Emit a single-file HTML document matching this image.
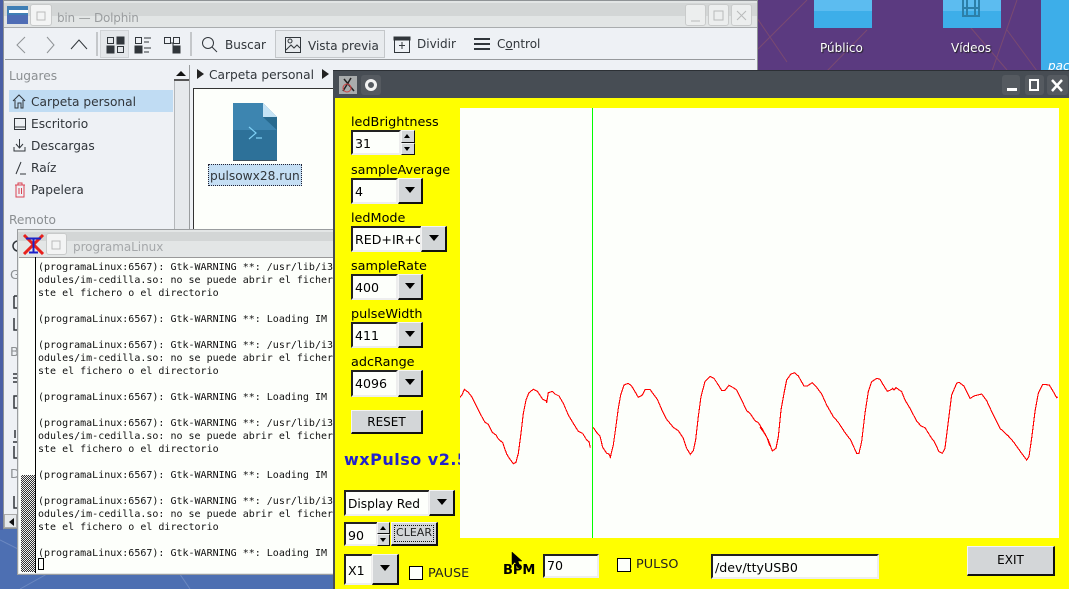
<!DOCTYPE html>
<html><head><meta charset="utf-8"><style>
html,body{margin:0;padding:0}
body{width:1069px;height:589px;overflow:hidden;position:relative;background:#4d6fb2;font-family:"DejaVu Sans","Liberation Sans",sans-serif;font-size:12.8px;color:#000}
div,span,svg{position:absolute;box-sizing:border-box}
.t{white-space:nowrap;line-height:16px}
.d{color:#31363b;font-size:12.2px}
.fld{background:#fdfffb;border:2px solid;border-color:#222 #eee #eee #222;padding-left:2px;line-height:23px;overflow:hidden;white-space:nowrap;font-size:12.6px}
.btn{background:#d3d6d8;border:1px solid;border-color:#f4f4f4 #111 #111 #f4f4f4;border-right-width:2px;border-bottom-width:2px;text-align:center}
.arr{width:0;height:0;border:5px solid transparent;border-top:6px solid #000;border-bottom:0;left:50%;top:50%;margin:-4px 0 0 -5px}
.cb{background:#fdfffb;border:1px solid #000;width:14px;height:14px}
pre{position:absolute;margin:0;font:10px/13px "DejaVu Sans Mono","Liberation Mono",monospace;color:#111}
</style></head><body>
<!-- desktop -->
<div style="left:757px;top:0;width:312px;height:71px;background:#5b3a80"></div>
<svg style="left:757px;top:0" width="312" height="71" stroke="#7a4a70" fill="none" stroke-width="1"><path d="M0 18L30 62M50 0L0 50M190 0L250 70M250 30L280 71M260 0L235 71M110 30L70 71"/></svg>
<div style="left:814px;top:0;width:58px;height:28px;background:#3daee9"></div><div style="left:814px;top:0;width:58px;height:11px;background:#5cbcf0"></div>
<div style="left:943px;top:0;width:58px;height:28px;background:#3daee9"></div><div style="left:943px;top:0;width:58px;height:11px;background:#5cbcf0"></div>
<svg style="left:961px;top:0" width="20" height="18" fill="none" stroke="#2c7fa8" stroke-width="2"><path d="M2 0V16H18V0M2 8H18M6 0V16M14 0V16"/></svg>
<div style="left:1041px;top:0;width:28px;height:71px;background:#3daee9"></div>
<div class="t" style="left:820px;top:40px;color:#fff;font-size:12px;text-shadow:1px 1px 1px #222">Público</div>
<div class="t" style="left:951px;top:40px;color:#fff;font-size:12px;text-shadow:1px 1px 1px #222">Vídeos</div>
<div class="t" style="left:1048px;top:58px;color:#fff;font-size:12px;font-style:italic">pac</div>
<svg style="left:0;top:530px" width="334" height="59" stroke="#6c88c0" fill="none"><path d="M0 10L60 40M150 0L190 59M20 59L90 20"/></svg>

<!-- Dolphin -->
<div style="left:3px;top:0;width:755px;height:529px;background:#eef1f5;border:1px solid #8f9396"></div>
<div style="left:0;top:0;width:3px;height:530px;background:#4a5fa5"></div>
<div style="left:4px;top:1px;width:753px;height:26px;background:#e2e5e5"></div>
<div style="left:4px;top:3px;width:753px;height:13px;background:#d3d6d6"></div>
<svg style="left:7px;top:5px" width="22" height="20"><rect y="1" width="21" height="18" fill="#3f7fb5"/><rect x="2" y="5" width="19" height="3" fill="#fff"/><path d="M0 10H21V19H0Z" fill="#4f6db5"/></svg>
<div style="left:30px;top:4px;width:22px;height:22px;background:#f3f4f4;border:1px solid #c8caca;border-radius:3px"></div>
<svg style="left:35px;top:10px" width="12" height="12" fill="none" stroke="#bbb"><rect x="2" y="2" width="8" height="8"/></svg>
<div class="t" style="left:57px;top:10px;color:#9a9d9f;font-size:12px;letter-spacing:-.2px">bin — Dolphin</div>
<div style="left:685px;top:4px;width:21px;height:22px;background:#eceeee;border:1px solid #c9cbcb;border-radius:3px"></div>
<div style="left:708px;top:4px;width:21px;height:22px;background:#eceeee;border:1px solid #c9cbcb;border-radius:3px"></div>
<div style="left:731px;top:4px;width:21px;height:22px;background:#eceeee;border:1px solid #c9cbcb;border-radius:3px"></div>
<svg style="left:685px;top:4px" width="67" height="22" fill="none" stroke="#b8bbbb"><path d="M6 17H15M29 7H38V16H29ZM52 7L61 16M61 7L52 16"/></svg>
<div style="left:4px;top:27px;width:753px;height:1px;background:#a9acae"></div>
<div style="left:5px;top:59px;width:750px;height:1px;background:#96999c"></div>
<!-- toolbar -->
<svg style="left:0;top:28px" width="500" height="32" fill="none" stroke="#31363b" stroke-width="1">
<path d="M25 9L17 17L25 25M47 9L54 17L47 25" stroke="#8f9396"/>
<path d="M71 21L79 12L87 21"/>
<path d="M97 4V28M191 4V28" stroke="#9a9d9f"/>
<rect x="100.5" y="2.5" width="28" height="27" fill="#e4e7ea" stroke="#d0d3d6"/>
<rect x="107.5" y="9.5" width="6" height="6"/><rect x="117" y="9" width="7" height="7" fill="#31363b"/><rect x="107" y="18" width="7" height="7" fill="#31363b"/><rect x="117.5" y="18.500" width="6" height="6"/>
<rect x="135.500" y="9.500" width="6" height="6"/><rect x="135" y="18" width="7" height="7" fill="#31363b"/><path d="M144 10H151M144 14H149M144 20H151M144 24H149"/>
<rect x="164.500" y="9.500" width="6" height="6"/><rect x="173.500" y="9.500" width="6" height="6"/><rect x="173" y="18" width="7" height="7" fill="#31363b"/><path d="M170 15H173V20"/>
<circle cx="208" cy="15" r="5.500"/><path d="M212 19L217 24"/>
<rect x="275.500" y="2.500" width="109" height="27" stroke="#c4c7ca" fill="#e8ebee"/>
<rect x="285.500" y="9.500" width="15" height="15"/><circle cx="290" cy="13" r="2"/><path d="M286 22L291 17L294 20L297 17L300 20"/>
<rect x="394.500" y="9.500" width="15" height="15"/><path d="M402 14V21M399 17.500H405" /><rect x="394" y="9" width="16" height="3" fill="#31363b"/>
<path d="M474 11H490M474 16H490M474 21H490" stroke-width="2"/>
<path d="M541 23H546L543.500 26Z" fill="#31363b"/>
</svg>
<div class="t d" style="left:225px;top:37px;font-size:12px">Buscar</div>
<div class="t d" style="left:308px;top:38px;font-size:12px">Vista previa</div>
<div class="t d" style="left:417px;top:36px;font-size:12px">Dividir</div>
<div class="t d" style="left:497px;top:36px;font-size:12px">C<span style="position:static;text-decoration:underline">o</span>ntrol</div>
<!-- sidebar -->
<div class="t" style="left:9px;top:68px;color:#8b8f92;font-size:12.2px">Lugares</div>
<div style="left:9px;top:90px;width:164px;height:22px;background:#c0dcf3"></div>
<div class="t d" style="left:31px;top:94px">Carpeta personal</div>
<div class="t d" style="left:31px;top:116px">Escritorio</div>
<div class="t d" style="left:31px;top:138px">Descargas</div>
<div class="t d" style="left:31px;top:160px">Raíz</div>
<div class="t d" style="left:31px;top:182px">Papelera</div>
<div class="t" style="left:9px;top:212px;color:#8b8f92;font-size:12.2px">Remoto</div>
<svg style="left:12px;top:92px" width="16" height="110" fill="none" stroke="#31363b">
<path d="M1 9L7 3L13 9M3 8V16H6V11H9V16H11V8"/>
<rect x="2.500" y="26.500" width="11" height="11"/><path d="M3 35H13"/>
<path d="M2 55V59H13V55M7.500 47V55M4 52L7.500 56L11 52"/>
<path d="M4 82L9 70M8 82H14"/>
<path d="M3 93H13M6 93V91H10V93M4 93V105H12V93M7 96V102M9.500 96V102" stroke="#da4453"/>
</svg>
<div style="left:174px;top:65px;width:15px;height:464px;background:#e6e9ec;border-left:1px solid #b4b7ba"></div>
<div style="left:174px;top:65px;width:15px;height:16px;background:#eef1f5;border-bottom:2px solid #555"></div>
<div style="left:176px;top:71px;width:0;height:0;border:5px solid transparent;border-bottom:5px solid #111;border-top:0"></div>
<div style="left:189px;top:65px;width:4px;height:464px;background:#eef1f5;border-left:1px solid #9a9d9f"></div>
<div style="left:197px;top:69px;width:0;height:0;border:5px solid transparent;border-left:7px solid #222"></div>
<div class="t d" style="left:209px;top:67px">Carpeta personal</div>
<div style="left:322px;top:69px;width:0;height:0;border:5px solid transparent;border-left:7px solid #222"></div>
<div style="left:193px;top:88px;width:142px;height:441px;background:#fdfffb;border:1px solid #333;border-right:0"></div>
<svg style="left:233px;top:103px" width="44" height="58"><path d="M0 0H30L44 14V58H0Z" fill="#2d7199"/><path d="M0 0H30V14L44 27H0Z" fill="#3d85b0"/><path d="M30 0L44 14H30Z" fill="#c5e3f5"/><path d="M30 14H44V27Z" fill="#276a8f"/><path d="M16 24L23 30L16 36M23 35H29" fill="none" stroke="#7fd0f5" stroke-width="1.200"/><rect y="57" width="44" height="1" fill="#3c4d5a"/></svg>
<div style="left:208px;top:164px;width:94px;height:22px;background:#c5dff4;border:1px dotted #223"></div>
<div class="t d" style="left:210px;top:168px">pulsowx28.run</div>
<!-- sidebar leftovers -->
<div class="t" style="left:10px;top:268px;color:#8b8f92">G</div>
<div class="t" style="left:10px;top:345px;color:#8b8f92">B</div>
<div class="t" style="left:10px;top:467px;color:#8b8f92">D</div>
<svg style="left:10px;top:238px" width="8" height="290" fill="none" stroke="#31363b" stroke-width="1.500"><circle cx="8" cy="8" r="5"/><path d="M4 58H8M4 58V70H8M4 80V92H8M3 136H8M3 140H8M3 144H8M4 158H8V170H4ZM5 192V200M3 204H7M4 208V220H8M4 258V270H8"/></svg>
<div style="left:4px;top:514px;width:13px;height:14px;background:#e6e9ec;border:1px solid #aaa"></div>
<div style="left:9px;top:518px;width:0;height:0;border:4px solid transparent;border-right:5px solid #111;border-left:0"></div>
<div style="left:3px;top:528px;width:15px;height:1px;background:#8f9396"></div>

<!-- Terminal -->
<div style="left:17px;top:229px;width:318px;height:346px;background:#e3e6e6;border:1px solid #9a9d9f"></div>
<div style="left:18px;top:232px;width:316px;height:9px;background:#d3d6d6"></div>
<svg style="left:22px;top:233px" width="23" height="22" fill="none"><path d="M2 2L21 21M21 2L2 21" stroke="#e8211c" stroke-width="3"/><path d="M4 5.500H19M11.500 5V19M7 19.500H16" stroke="#1c22c8" stroke-width="2"/></svg>
<div style="left:46px;top:233px;width:21px;height:22px;background:#f3f4f4;border:1px solid #c8caca;border-radius:3px"></div>
<svg style="left:50px;top:239px" width="12" height="12" fill="none" stroke="#bbb"><rect x="2" y="2" width="8" height="8"/></svg>
<div class="t" style="left:73px;top:239px;color:#a5a8aa;font-size:12px;letter-spacing:-.05px">programaLinux</div>
<div style="left:19px;top:257px;width:316px;height:316px;background:#fdfffb;border-top:1px solid #999"></div>
<div style="left:35px;top:257px;width:1px;height:316px;background:#000"></div>
<div style="left:21px;top:475px;width:14px;height:97px;background:repeating-conic-gradient(#333 0 25%,#eee 0 50%) 0 0/2px 2px"></div>
<pre style="left:38px;top:261px;width:295px;height:312px;overflow:hidden">(programaLinux:6567): Gtk-WARNING **: /usr/lib/i386
odules/im-cedilla.so: no se puede abrir el fichero
ste el fichero o el directorio

(programaLinux:6567): Gtk-WARNING **: Loading IM

(programaLinux:6567): Gtk-WARNING **: /usr/lib/i386
odules/im-cedilla.so: no se puede abrir el fichero
ste el fichero o el directorio

(programaLinux:6567): Gtk-WARNING **: Loading IM

(programaLinux:6567): Gtk-WARNING **: /usr/lib/i386
odules/im-cedilla.so: no se puede abrir el fichero
ste el fichero o el directorio

(programaLinux:6567): Gtk-WARNING **: Loading IM

(programaLinux:6567): Gtk-WARNING **: /usr/lib/i386
odules/im-cedilla.so: no se puede abrir el fichero
ste el fichero o el directorio

(programaLinux:6567): Gtk-WARNING **: Loading IM</pre>
<div style="left:38px;top:558px;width:6px;height:12px;border:1px solid #000"></div>

<!-- wxPulso window -->
<div style="left:333px;top:70px;width:736px;height:519px;background:#474d54;border-top:1px solid #2c3035"></div>
<div style="left:335px;top:98px;width:734px;height:491px;background:#ff0"></div>
<div style="left:339px;top:76px;width:18px;height:18px;background:#a9acad"></div>
<svg style="left:339px;top:76px" width="18" height="18" fill="none"><path d="M4 15L12 2M5 3L15 15" stroke="#222" stroke-width="1.500"/><circle cx="8" cy="12" r="4" stroke="#c44"/></svg>
<div style="left:361px;top:75px;width:20px;height:20px;background:#555a60;border-radius:3px"></div>
<div style="left:365px;top:79px;width:12px;height:12px;border:3px solid #f2f2f2;border-radius:50%"></div>
<div style="left:1002px;top:75px;width:18px;height:20px;background:#555a60;border-radius:3px"></div>
<div style="left:1025px;top:75px;width:19px;height:20px;background:#555a60;border-radius:3px"></div>
<div style="left:1047px;top:75px;width:21px;height:20px;background:#555a60;border-radius:3px"></div>
<svg style="left:1002px;top:75px" width="66" height="20" fill="none" stroke="#fff" stroke-width="2"><path d="M5 14.500H15" stroke-width="3"/><rect x="28" y="5" width="8" height="10"/><path d="M50 5L60 16M60 5L50 16" stroke-width="2.500"/></svg>

<!-- Left controls -->
<div class="t" style="left:351px;top:115px">ledBrightness</div>
<div class="fld" style="left:351px;top:130px;width:50px;height:25px">31</div>
<div class="btn" style="left:401px;top:130px;width:14px;height:13px;border-width:1px;background:#d3d6d8"></div>
<div class="btn" style="left:401px;top:143px;width:14px;height:12px;border-width:1px;background:#d3d6d8"></div>
<div style="left:404px;top:134px;width:0;height:0;border:3px solid transparent;border-bottom:4px solid #000;border-top:0"></div>
<div style="left:404px;top:147px;width:0;height:0;border:3px solid transparent;border-top:4px solid #000;border-bottom:0"></div>

<div class="t" style="left:351px;top:163px">sampleAverage</div>
<div class="fld" style="left:351px;top:178px;width:47px;height:26px">4</div>
<div class="btn" style="left:398px;top:178px;width:25px;height:26px"><div class="arr"></div></div>

<div class="t" style="left:351px;top:211px">ledMode</div>
<div class="fld" style="left:351px;top:226px;width:71px;height:26px">RED+IR+G</div>
<div class="btn" style="left:421px;top:226px;width:26px;height:26px"><div class="arr"></div></div>

<div class="t" style="left:351px;top:259px">sampleRate</div>
<div class="fld" style="left:351px;top:274px;width:47px;height:26px">400</div>
<div class="btn" style="left:398px;top:274px;width:25px;height:26px"><div class="arr"></div></div>

<div class="t" style="left:351px;top:307px">pulseWidth</div>
<div class="fld" style="left:351px;top:322px;width:47px;height:26px">411</div>
<div class="btn" style="left:398px;top:322px;width:25px;height:26px"><div class="arr"></div></div>

<div class="t" style="left:351px;top:355px">adcRange</div>
<div class="fld" style="left:351px;top:370px;width:47px;height:27px">4096</div>
<div class="btn" style="left:398px;top:370px;width:25px;height:27px"><div class="arr"></div></div>

<div class="btn" style="left:351px;top:410px;width:72px;height:24px;font-size:12px;line-height:22px">RESET</div>

<div class="t" style="left:344px;top:451px;width:116px;overflow:hidden;font-weight:bold;font-size:16px;line-height:18px;letter-spacing:.5px;color:#2222cc">wxPulso v2.5</div>

<div class="fld" style="left:344px;top:490px;width:86px;height:26px;font-size:12.2px;line-height:25px">Display Red</div>
<div class="btn" style="left:429px;top:490px;width:26px;height:26px"><div class="arr"></div></div>

<div class="fld" style="left:344px;top:522px;width:34px;height:24px;line-height:23px">90</div>
<div class="btn" style="left:377px;top:522px;width:13px;height:12px;border-width:1px"></div>
<div class="btn" style="left:377px;top:534px;width:13px;height:12px;border-width:1px"></div>
<div style="left:380px;top:526px;width:0;height:0;border:3px solid transparent;border-bottom:4px solid #000;border-top:0"></div>
<div style="left:380px;top:538px;width:0;height:0;border:3px solid transparent;border-top:4px solid #000;border-bottom:0"></div>
<div class="btn" style="left:391px;top:522px;width:47px;height:24px;font-size:11px;line-height:20px;color:#222">CLEAR</div>
<div style="left:394px;top:525px;width:40px;height:17px;border:1px dotted #111"></div>

<div class="fld" style="left:344px;top:554px;width:29px;height:31px;line-height:29px">X1</div>
<div class="btn" style="left:372px;top:554px;width:27px;height:31px"><div class="arr"></div></div>
<div class="cb" style="left:409px;top:566px"></div>
<div class="t" style="left:428px;top:566px;font-size:12.800px;color:#222">PAUSE</div>

<!-- Plot -->
<div style="left:460px;top:108px;width:599px;height:430px;background:#fdfffb"></div>
<div style="left:592px;top:108px;width:1px;height:430px;background:#0f0"></div>
<svg style="left:0;top:0" width="1069" height="589" fill="none" stroke="#f00" stroke-width="3.300" shape-rendering="crispEdges">
<g transform="translate(460 360) scale(.3333)">
<polyline points="0,112 6,105 13,88 25,97 35,110 45,130 60,160 75,187 85,193 97,217 108,225 115,237 128,248 140,282 150,298 160,311 168,307 175,280 183,220 190,160 198,120 207,98 220,88 232,94 248,118 258,122 260,128 265,98 277,94 285,102 297,108 310,130 325,165 340,190 355,214 368,220 380,240 387,245 391,263"/>
<polyline points="400,202 408,215 420,228 428,262 440,280 447,282 451,292 460,255 467,205 475,145 482,105 492,75 505,70 515,78 525,95 535,112 547,105 556,88 570,88 580,102 592,118 605,148 620,178 640,202 655,212 670,235 680,265 691,283 700,272 707,240 715,170 723,110 735,65 750,49 762,55 772,70 785,91 795,91 807,76 818,82 830,90 845,120 860,152 870,160 885,182 895,188 910,212 922,235 929,257"/>
</g>
<g transform="translate(760 360) scale(.3333)">
<polyline points="0,202 12,218 25,240 37,273 48,265 55,230 63,150 72,100 80,60 92,43 103,38 115,48 132,78 142,78 157,68 170,82 185,102 200,135 220,170 235,187 255,218 272,240 290,280 297,280 305,245 315,160 325,95 335,65 350,55 360,58 370,75 382,94 392,90 398,85 402,90 408,83 425,95 435,120 450,145 470,183 483,198 495,203 515,235 523,245 537,275 547,280 555,265 565,185 575,105 590,70 597,67 612,78 630,115 645,107 665,102 680,122 700,165 720,205 745,228 760,245 785,280 800,300 807,290 815,235 825,155 835,100 848,73 868,75 880,95 890,113 893,110"/>
</g></svg>

<!-- Bottom -->
<div class="t" style="left:503px;top:563px;font-weight:bold;font-size:13px">BPM</div>
<div class="fld" style="left:543px;top:554px;width:56px;height:24px;line-height:20px">70</div>
<div class="cb" style="left:617px;top:558px"></div>
<div class="t" style="left:636px;top:557px;font-size:12.800px;color:#222">PULSO</div>
<div class="fld" style="left:711px;top:554px;width:168px;height:25px;line-height:23px">/dev/ttyUSB0</div>
<div class="btn" style="left:967px;top:546px;width:88px;height:30px;font-size:12px;line-height:27px">EXIT</div>
<svg style="left:511px;top:551px" width="12" height="18"><path d="M1 1V14L4 11L7 17L9 16L7 10H11Z" fill="#000" stroke="#000" stroke-width=".5"/></svg>
</body></html>
